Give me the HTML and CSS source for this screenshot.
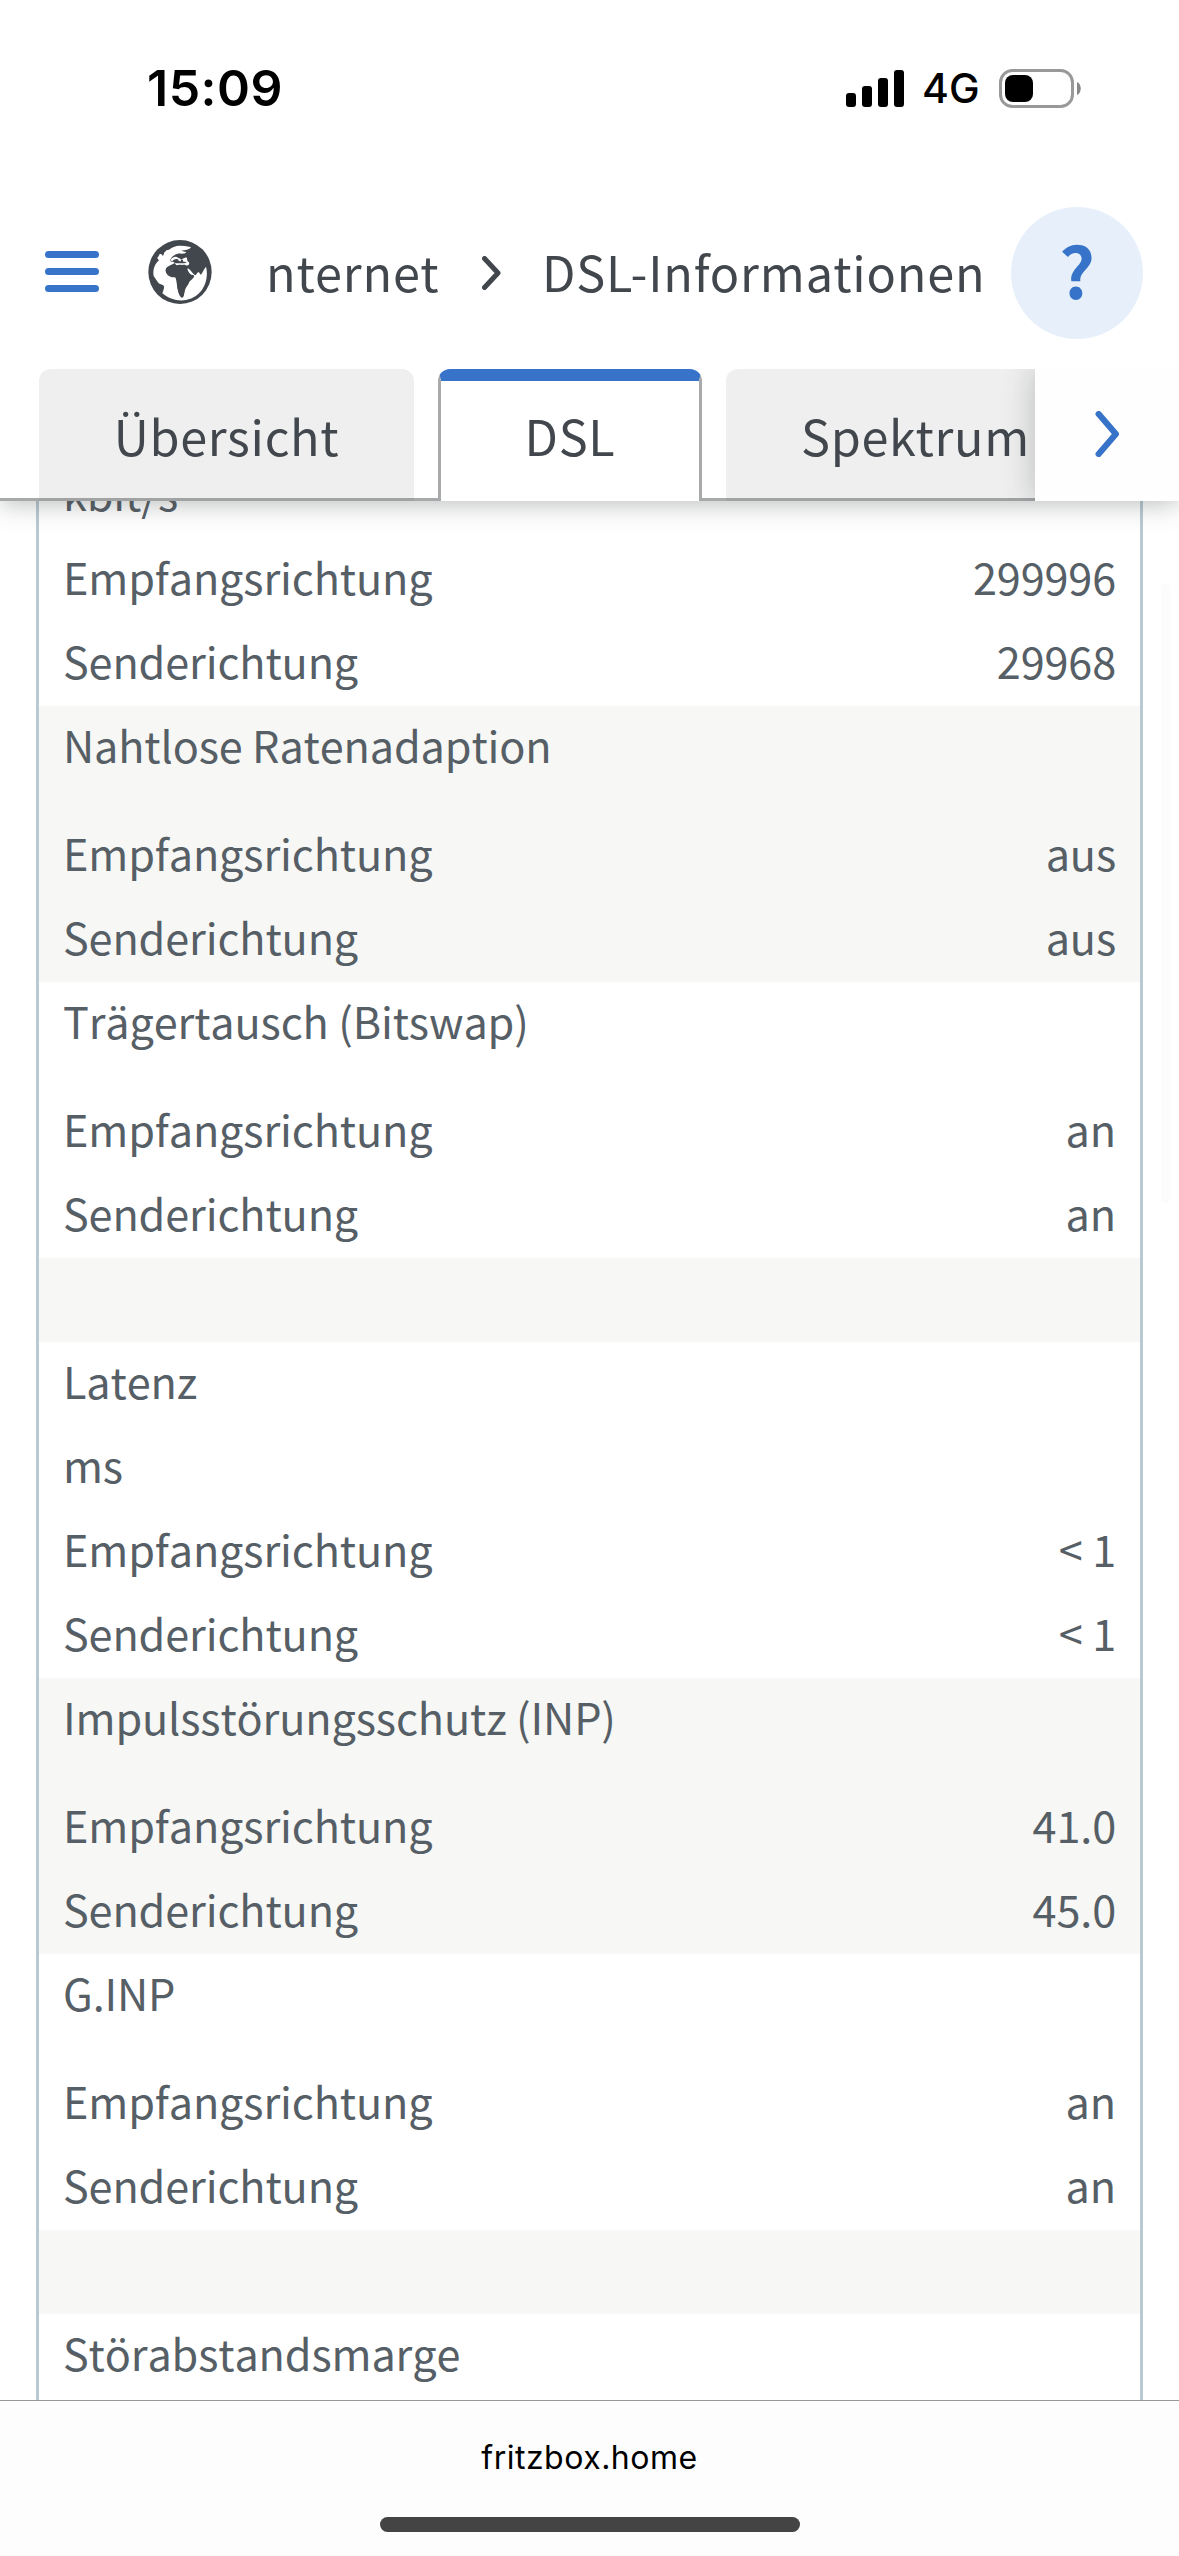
FILE: index.html
```html
<!DOCTYPE html>
<html lang="de">
<head>
  <meta charset="UTF-8">
  <title>FRITZ!Box</title>
  <link rel="stylesheet" href="styles.css">
</head>
<body>

  <header class="kopf">
    <div class="statusleiste">
      <span class="uhrzeit">15:09</span>
      <div class="status-icons">
        <svg class="signal" viewBox="0 0 58 37">
          <rect x="0" y="23" width="10" height="14" rx="3"/>
          <rect x="16" y="16" width="10" height="21" rx="3"/>
          <rect x="32" y="8" width="10" height="29" rx="3"/>
          <rect x="48" y="0" width="10" height="37" rx="3"/>
        </svg>
        <span class="netz">4G</span>
        <svg class="akku" viewBox="0 0 82 39">
          <rect x="1.5" y="1.5" width="72" height="36" rx="12" fill="none" stroke="#999" stroke-width="3"/>
          <rect x="6" y="6" width="28" height="27" rx="8"/>
          <path d="M78 13c5 2 5 11 0 13z" fill="#888"/>
        </svg>
      </div>
    </div>

    <div class="titelleiste">
      <svg class="menue" viewBox="0 0 54 41">
        <path d="M3.5 3.5h47M3.5 20.5h47M3.5 37.5h47"/>
      </svg>
      <svg class="globus" viewBox="55 43 190 192">
        <ellipse cx="150" cy="139" rx="95" ry="96" fill="#41474d"/>
        <g fill="#fff">
          <path d="M109 74C116 74 122 68 131 64C144 58 160 60 178 63C184 64 184 67 178 69C170 72 163 75 154 74C157 78 164 78 169 80C162 87 151 83 144 84C134 86 125 92 120 104C124 111 128 108 136 108C133 115 124 116 113 123C104 129 106 138 112 144C118 153 129 154 136 154C141 166 140 183 145 199C148 209 152 216 157 216C162 214 162 203 164 192C166 181 176 177 179 164L192 151C190 147 184 150 178 143C174 137 170 132 174 128C182 132 188 145 195 149C200 148 200 141 206 139C209 142 210 146 213 147C218 141 220 132 228 123C235 148 228 181 210 200C178 234 128 230 97 203C99 197 103 188 102 182C98 176 91 177 86 173C81 166 76 158 71 151C68 136 72 121 81 110L87 104C85 101 82 99 82 96C86 92 87 90 89 85C93 84 96 86 98 90C103 89 100 81 105 79Z"/>
          <path d="M121 104C126 95 137 90 144 96C151 99 157 103 161 98L169 95C173 99 170 103 173 107C178 110 180 114 175 119C169 121 164 115 158 118C151 117 145 116 139 119L132 110Z"/>
        </g>
        <path d="M127 107C131 101 140 98 146 102C143 105 149 106 153 107L152 100L158 102L160 108L170 109C168 114 159 112 153 113L136 113Z" fill="#41474d"/>
        <path d="M107 135C111 125 124 121 136 121C148 117 161 119 168 126L180 146C184 150 190 149 193 151C191 158 182 164 178 168C174 180 166 185 164 196C162 208 160 215 156 215C150 214 146 202 144 192C140 177 144 164 136 155C123 155 109 151 107 135Z" fill="#41474d"/>
      </svg>
      <span class="pfad">nternet</span>
      <svg class="trenner" viewBox="0 0 19 34">
        <path d="M2.5 2.5L16 17L2.5 31.5"/>
      </svg>
      <span class="pfad aktuell">DSL-Informationen</span>
      <span class="hilfe">?</span>
    </div>

    <nav class="tabs">
      <a class="tab uebersicht">Übersicht</a>
      <a class="tab aktiv">DSL</a>
      <a class="tab spektrum">Spektrum</a>
      <div class="weiter">
        <svg viewBox="0 0 27 52">
          <path d="M3.5 3.5L23 26L3.5 48.5"/>
        </svg>
      </div>
    </nav>
  </header>

  <main class="inhalt">
    <div class="tabelle">
      <section class="gruppe">
        <h4>kbit/s</h4>
        <p><span>Empfangsrichtung</span><span>299996</span></p>
        <p><span>Senderichtung</span><span>29968</span></p>
      </section>
      <section class="gruppe grau">
        <h4 class="abstand">Nahtlose Ratenadaption</h4>
        <p><span>Empfangsrichtung</span><span>aus</span></p>
        <p><span>Senderichtung</span><span>aus</span></p>
      </section>
      <section class="gruppe">
        <h4 class="abstand">Trägertausch (Bitswap)</h4>
        <p><span>Empfangsrichtung</span><span>an</span></p>
        <p><span>Senderichtung</span><span>an</span></p>
      </section>
      <section class="gruppe grau leer"></section>
      <section class="gruppe">
        <h4>Latenz</h4>
        <h4>ms</h4>
        <p><span>Empfangsrichtung</span><span>&lt; 1</span></p>
        <p><span>Senderichtung</span><span>&lt; 1</span></p>
      </section>
      <section class="gruppe grau">
        <h4 class="abstand">Impulsstörungsschutz (INP)</h4>
        <p><span>Empfangsrichtung</span><span>41.0</span></p>
        <p><span>Senderichtung</span><span>45.0</span></p>
      </section>
      <section class="gruppe">
        <h4 class="abstand">G.INP</h4>
        <p><span>Empfangsrichtung</span><span>an</span></p>
        <p><span>Senderichtung</span><span>an</span></p>
      </section>
      <section class="gruppe grau leer"></section>
      <section class="gruppe">
        <h4>Störabstandsmarge</h4>
      </section>
    </div>
    <div class="scrollbalken"></div>
  </main>

  <footer class="adressleiste">
    <span class="adresse">fritzbox.home</span>
    <div class="home-balken"></div>
  </footer>

</body>
</html>
```
FILE: styles.css
```css
* {
  box-sizing: border-box;
}

body {
  margin: 0;
  width: 1179px;
  height: 2556px;
  display: flex;
  flex-direction: column;
  overflow: hidden;
  background-color: #fff;
  color: #565e66;
  font-family: "Noto Sans CJK SC", "Noto Sans", sans-serif;
}

svg {
  display: block;
  flex: none;
}

/* Kopfbereich */
.kopf {
  position: relative;
  z-index: 2;
  height: 501px;
  flex: none;
  background-color: #fff;
  box-shadow: 0 3px 24px rgba(60, 65, 65, 0.35);
}

.statusleiste {
  height: 207px;
  padding: 58px 98px 0 147px;
  display: flex;
  justify-content: space-between;
  align-items: flex-start;
  color: #000;
  font-family: Inter, sans-serif;
}

.uhrzeit {
  font-size: 50px;
  font-weight: 600;
  letter-spacing: 0.5px;
  line-height: 60px;
}

.status-icons {
  display: flex;
  align-items: center;
  height: 60px;
}

.signal {
  width: 58px;
  height: 37px;
}

.netz {
  width: 95px;
  padding-left: 18px;
  font-size: 41px;
  font-weight: 500;
  line-height: 62px;
}

.akku {
  width: 82px;
  height: 39px;
}

.titelleiste {
  height: 132px;
  padding: 0 36px 0 45px;
  display: flex;
  align-items: center;
  color: #41474d;
}

.menue {
  width: 54px;
  height: 41px;
  margin: 0 49px 3px 0;
  fill: none;
  stroke: #3774c9;
  stroke-width: 7;
  stroke-linecap: round;
}

.globus {
  width: 64px;
  height: 64px;
  margin: 0 54px 3px 0;
}

.pfad {
  width: 216px;
  height: 132px;
  font-size: 48.6px;
  letter-spacing: 0.85px;
  line-height: 129px;
  white-space: nowrap;
}

.trenner {
  width: 19px;
  height: 34px;
  margin: 0 41px 0 0;
  fill: none;
  stroke: #41474d;
  stroke-width: 5;
  stroke-linecap: round;
  stroke-linejoin: round;
}

.aktuell {
  flex: 1;
}

.hilfe {
  width: 132px;
  height: 132px;
  flex: none;
  border-radius: 50%;
  background-color: #e7f0fa;
  color: #3774c9;
  font-size: 70px;
  font-weight: bold;
  line-height: 124px;
  text-align: center;
}

/* Reiter */
.tabs {
  height: 132px;
  margin-top: 30px;
  padding-left: 39px;
  display: flex;
  gap: 24px;
  overflow: hidden;
  position: relative;
  background: linear-gradient(#a7a9aa, #a7a9aa) 0 100% / 100% 3px no-repeat;
}

.tab {
  flex: none;
  height: 132px;
  border-radius: 12px 12px 0 0;
  border-bottom: 3px solid #a0a2a4;
  background-color: #efefef;
  color: #41474d;
  font-size: 48.6px;
  letter-spacing: 0.7px;
  line-height: 132px;
  text-align: center;
}

.uebersicht {
  width: 375px;
}

.spektrum {
  width: 379px;
}

.tab.aktiv {
  width: 264px;
  border: 3px solid #a7a9aa;
  border-top: 12px solid #3774c9;
  border-bottom: none;
  background-color: #fff;
  line-height: 108px;
}

.weiter {
  position: absolute;
  top: 0;
  right: 0;
  width: 144px;
  height: 132px;
  display: flex;
  align-items: center;
  padding: 0 0 3px 59px;
  background-color: #fefefe;
  box-shadow: 0 0 30px rgba(60, 65, 65, 0.3);
}

.weiter svg {
  width: 27px;
  height: 46px;
  fill: none;
  stroke: #3774c9;
  stroke-width: 7;
  stroke-linecap: round;
  stroke-linejoin: round;
}

/* DSL-Tabelle */
.inhalt {
  position: relative;
  flex: 1;
  min-height: 0;
  overflow: hidden;
}

.tabelle {
  margin: -47px 36px 0;
  height: 2000px;
  border: 3px solid #bacad3;
  border-top: none;
  font-size: 43.2px;
  font-kerning: none;
  letter-spacing: -0.13px;
}

.gruppe {
  padding: 0 24px;
}

.grau {
  background-color: #f7f7f5;
}

.leer {
  height: 84px;
}

.gruppe h4,
.gruppe p {
  height: 84px;
  margin: 0;
  font-weight: normal;
  line-height: 76px;
}

.gruppe h4.abstand {
  height: 108px;
}

.gruppe p {
  display: flex;
  justify-content: space-between;
}

.scrollbalken {
  position: absolute;
  top: 82px;
  right: 9px;
  width: 9px;
  height: 620px;
  border-radius: 5px;
  background-color: #fcfcfc;
}

/* Adressleiste unten */
.adressleiste {
  height: 156px;
  flex: none;
  display: flex;
  flex-direction: column;
  align-items: center;
  border-top: 1px solid #999;
  background-color: #fdfdfd;
}

.adresse {
  margin-top: 35px;
  height: 81px;
  color: #000;
  font-family: Inter, sans-serif;
  font-size: 32px;
  letter-spacing: 0.5px;
  line-height: 44px;
}

.home-balken {
  width: 420px;
  height: 15px;
  border-radius: 8px;
  background-color: #444;
}
```
